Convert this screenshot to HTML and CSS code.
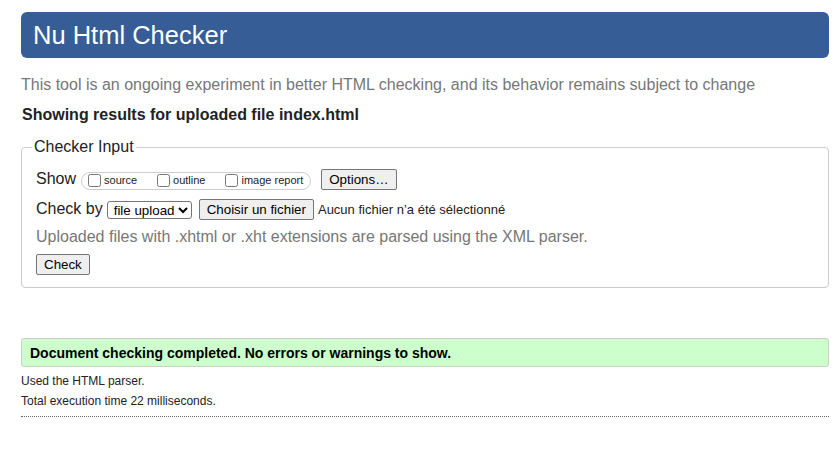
FILE: index.html
```html
<!DOCTYPE html>
<html lang="en">
<head>
<meta charset="utf-8">
<title>Nu Html Checker</title>
<link rel="stylesheet" href="styles.css">
</head>
<body>
<div class="page">
  <h1 class="title">Nu Html Checker</h1>
  <p class="intro">This tool is an ongoing experiment in better HTML checking, and its behavior remains subject to change</p>
  <p class="showing">Showing results for uploaded file index.html</p>
  <form class="checker">
    <fieldset class="input-set">
      <legend class="legend">Checker Input</legend>
      <div class="row row-show">
        <span class="row-label">Show</span>
        <span class="pill">
          <label class="opt"><input type="checkbox" class="cb">source</label>
          <label class="opt"><input type="checkbox" class="cb">outline</label>
          <label class="opt opt-last"><input type="checkbox" class="cb">image report</label>
        </span>
        <button type="button" class="btn btn-options">Options…</button>
      </div>
      <div class="row row-by">
        <span class="row-label">Check by</span>
        <select class="select"><option>file upload</option></select>
        <button type="button" class="btn btn-file">Choisir un fichier</button>
        <span class="file-status">Aucun fichier n’a été sélectionné</span>
      </div>
      <p class="hint">Uploaded files with .xhtml or .xht extensions are parsed using the XML parser.</p>
      <div class="row row-submit">
        <button type="button" class="btn btn-check">Check</button>
      </div>
    </fieldset>
  </form>
  <p class="success">Document checking completed. No errors or warnings to show.</p>
  <div class="details">
    <p class="detail">Used the HTML parser.</p>
    <p class="detail">Total execution time 22 milliseconds.</p>
  </div>
</div>
</body>
</html>
```

FILE: styles.css
```css
html, body {
  margin: 0;
  padding: 0;
  background: #ffffff;
}

body {
  font-family: "Liberation Sans", Arial, sans-serif;
  color: #222222;
}

.page {
  padding: 12px 9px 30px 21px;
}

.title {
  margin: 0;
  height: 46px;
  line-height: 46px;
  padding: 0 12px;
  background: #365d95;
  color: #ffffff;
  font-size: 25.5px;
  font-weight: normal;
  border-radius: 6px;
}

.intro {
  margin: 18px 0 0;
  font-size: 16px;
  line-height: 18px;
  color: #777777;
}

.showing {
  margin: 12px 0 0 1px;
  font-size: 16px;
  line-height: 18px;
  font-weight: bold;
  color: #222222;
}

.checker {
  margin: 14px 0 0;
}

.input-set {
  margin: 0;
  padding: 13px 14px 12px 14px;
  border: 1px solid #cccccc;
  border-radius: 4px;
  min-width: 0;
}

.legend {
  font-size: 16px;
  line-height: 18px;
  padding: 0 2px;
  margin-left: -4px;
  color: #222222;
}

.row {
  display: flex;
  align-items: baseline;
}

.row-label {
  font-size: 16px;
  line-height: 18px;
  color: #222222;
}

.row-show .row-label {
  margin-right: 5px;
}

.pill {
  display: inline-flex;
  align-items: center;
  height: 16px;
  padding: 0 7px 0 2px;
  border: 1px solid #cccccc;
  border-radius: 9px;
  font-size: 11px;
  line-height: 13px;
  margin-right: 10px;
  align-self: center;
  margin-top: 2px;
}

.opt {
  display: inline-flex;
  align-items: center;
  margin-right: 16px;
  color: #222222;
}

.opt-last {
  margin-right: 0;
}

.cb {
  width: 13px;
  height: 13px;
  margin: 0 3px 0 4px;
}

.btn {
  font-family: "Liberation Sans", Arial, sans-serif;
  font-size: 13.333px;
  line-height: 15px;
  padding: 2px 7px;
  border: 1px solid #767676;
  border-radius: 2px;
  background: #efefef;
  color: #000000;
}

.row-by {
  margin-top: 9px;
}

.row-by .row-label {
  margin-right: 4px;
}

.select {
  width: 85px;
  height: 18px;
  font-family: "Liberation Sans", Arial, sans-serif;
  font-size: 13.333px;
  border: 1px solid #767676;
  border-radius: 3px;
  background: #ffffff;
  color: #000000;
  padding: 0 0 0 2px;
  margin-right: 7px;
  align-self: center;
}

.btn-file {
  margin-right: 4px;
}

.file-status {
  font-size: 13px;
  color: #222222;
}

.hint {
  margin: 8px 0 0;
  font-size: 16px;
  line-height: 18px;
  color: #777777;
}

.row-submit {
  margin-top: 8px;
}

.success {
  margin: 50px 0 0;
  padding: 6px 8px 5px;
  line-height: 16px;
  font-size: 14px;
  font-weight: bold;
  background: #ccffcc;
  border: 1px solid #cccccc;
  border-radius: 3px;
  color: #000000;
}

.details {
  margin-top: 5px;
  padding-bottom: 5px;
  border-bottom: 1px dotted #666666;
}

.detail {
  margin: 0;
  font-size: 12px;
  line-height: 19px;
  color: #222222;
}

.detail + .detail {
  margin-top: 1px;
}
```
